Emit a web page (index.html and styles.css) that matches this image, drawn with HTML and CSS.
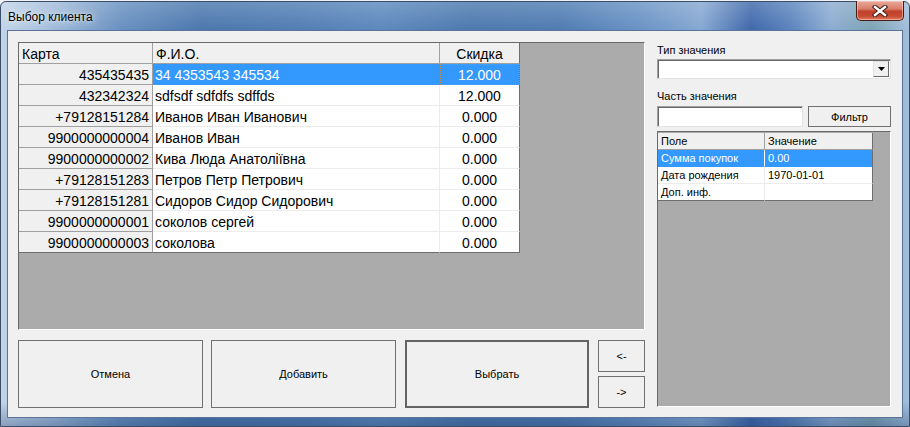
FILE: index.html
```html
<!DOCTYPE html>
<html lang="ru">
<head>
<meta charset="utf-8">
<title>Выбор клиента</title>
<link rel="stylesheet" href="styles.css">
</head>
<body>
<div class="window">
  <div class="titlebar">
    <span class="title">Выбор клиента</span>
    <div class="close">
      <svg width="18" height="12" viewBox="0 0 18 12">
        <path d="M4 2 L14 10 M14 2 L4 10" stroke="#3b1a14" stroke-width="4.4" stroke-linecap="square" fill="none"/>
        <path d="M4 2 L14 10 M14 2 L4 10" stroke="#ffffff" stroke-width="2.4" stroke-linecap="square" fill="none"/>
      </svg>
    </div>
  </div>
  <div class="client">
    <div class="left">
      <div class="panel main-panel">
        <div class="grid">
          <div class="c hdr">Карта</div><div class="c hdr">Ф.И.О.</div><div class="c hdr ctr last">Скидка</div>
          <div class="c fix r">435435435</div><div class="c sel">34 4353543 345534</div><div class="c sel ctr last focus">12.000</div>
          <div class="c fix r">432342324</div><div class="c">sdfsdf sdfdfs sdffds</div><div class="c ctr last">12.000</div>
          <div class="c fix r">+79128151284</div><div class="c">Иванов Иван Иванович</div><div class="c ctr last">0.000</div>
          <div class="c fix r">9900000000004</div><div class="c">Иванов Иван</div><div class="c ctr last">0.000</div>
          <div class="c fix r">9900000000002</div><div class="c">Кива Люда Анатоліївна</div><div class="c ctr last">0.000</div>
          <div class="c fix r">+79128151283</div><div class="c">Петров Петр Петрович</div><div class="c ctr last">0.000</div>
          <div class="c fix r">+79128151281</div><div class="c">Сидоров Сидор Сидорович</div><div class="c ctr last">0.000</div>
          <div class="c fix r">9900000000001</div><div class="c">соколов сергей</div><div class="c ctr last">0.000</div>
          <div class="c fix r bot">9900000000003</div><div class="c bot">соколова</div><div class="c ctr last bot">0.000</div>
        </div>
      </div>
      <div class="buttons">
        <div class="btn big">Отмена</div>
        <div class="btn big">Добавить</div>
        <div class="btn big default">Выбрать</div>
        <div class="arrows">
          <div class="btn small">&lt;-</div>
          <div class="btn small">-&gt;</div>
        </div>
      </div>
    </div>
    <div class="right">
      <div class="label">Тип значения</div>
      <div class="combo">
        <div class="combo-btn">
          <svg width="7" height="4" viewBox="0 0 7 4"><path d="M0 0 H7 L3.5 4 Z" fill="#000"/></svg>
        </div>
      </div>
      <div class="label label2">Часть значения</div>
      <div class="filter-row">
        <div class="input"></div>
        <div class="btn filter">Фильтр</div>
      </div>
      <div class="panel props-panel">
        <div class="props">
          <div class="p hdr">Поле</div><div class="p hdr last">Значение</div>
          <div class="p sel">Сумма покупок</div><div class="p sel last">0.00</div>
          <div class="p">Дата рождения</div><div class="p last">1970-01-01</div>
          <div class="p bot">Доп. инф.</div><div class="p last bot"></div>
        </div>
      </div>
    </div>
  </div>
</div>
</body>
</html>
```
FILE: styles.css
```css
* { box-sizing: border-box; }
body {
  margin: 0;
  background: #eef1f5;
  font-family: "Liberation Sans", Arial, sans-serif;
  overflow: hidden;
}
.window {
  margin-top: 1px;
  width: 910px;
  height: 426px;
  border: 1px solid #3b4d66;
  border-radius: 6px 6px 0 0;
  background:
    linear-gradient(180deg, rgba(255,255,255,0.18) 0, rgba(255,255,255,0) 28px, rgba(0,0,0,0) 400px, rgba(20,50,100,0.35) 426px),
    linear-gradient(90deg, #c2d4e8 0, #a3bddb 50px, #6890c0 120px, #4b77ad 200px, #527eb4 300px, #5d89bd 380px, #4d79ae 470px, #507cb2 560px, #6a93c5 640px, #86a8d2 700px, #4068ab 750px, #5b84bd 790px, #8dacd2 830px, #7ea4b4 870px, #a5c0de 910px);
  display: flex;
  flex-direction: column;
}
.titlebar {
  height: 28px;
  display: flex;
  align-items: flex-start;
  justify-content: space-between;
  position: relative;
}
.title {
  padding: 8px 0 0 7px;
  font-size: 12px;
  color: #000;
  text-shadow: 0 0 8px rgba(255,255,255,0.9), 0 0 3px rgba(255,255,255,0.7);
}
.close {
  margin: -1px 5px 0 0;
  width: 48px;
  height: 20px;
  border: 1px solid #4a1c16;
  border-top: none;
  border-radius: 0 0 5px 5px;
  background: linear-gradient(180deg, #e9a89a 0, #d9806c 40%, #c0412b 55%, #c84a33 80%, #dd7d62 100%);
  box-shadow: inset 0 0 0 1px rgba(255,220,210,0.5);
  display: flex;
  align-items: center;
  justify-content: center;
}
.client {
  margin: 0 6px;
  height: 388px;
  border: 1px solid #5b7399;
  background: #f0f0f0;
  padding: 11px 11px 9px 10px;
  display: flex;
  gap: 12px;
}
.left {
  width: 627px;
  display: flex;
  flex-direction: column;
}
.panel {
  background: #ababab;
  border-top: 1px solid #696969;
  border-left: 1px solid #696969;
  border-right: 1px solid #ffffff;
  border-bottom: 1px solid #ffffff;
}
.main-panel {
  height: 288px;
}
.grid {
  display: grid;
  grid-template-columns: 134px 287px 80px;
  width: 501px;
  font-size: 14px;
  color: #000;
}
.c {
  height: 21px;
  padding: 3px 2px 0 2px;
  line-height: 16px;
  background: #ffffff;
  border-right: 1px solid #ececec;
  border-bottom: 1px solid #ececec;
  white-space: nowrap;
  overflow: hidden;
}
.c.hdr {
  background: #f0f0f0;
  border-right-color: #a0a0a0;
  border-bottom-color: #a0a0a0;
  padding-left: 3px;
}
.c.fix {
  background: #f0f0f0;
  border-right-color: #a0a0a0;
  border-bottom-color: #a0a0a0;
}
.c.r { text-align: right; padding-right: 3px; }
.c.ctr { text-align: center; padding-left: 0; padding-right: 0; }
.c.sel { background: #3399ff; color: #ffffff; border-right-color: #3399ff; border-bottom-color: #3399ff; }
.c.focus { outline: 1px dotted #d9822b; outline-offset: -1px; }
.c.last { border-right-color: #6e6e6e; }
.c.bot { border-bottom-color: #6e6e6e; }
.buttons {
  margin-top: 10px;
  height: 68px;
  display: flex;
}
.btn {
  background: #f0f0f0;
  border: 1px solid #707070;
  font-size: 11px;
  color: #000;
  display: flex;
  align-items: center;
  justify-content: center;
}
.big { width: 185px; height: 68px; margin-right: 8px; }
.big:nth-child(2) { margin-right: 9px; }
.big.default { width: 184px; border: 2px solid #646464; margin-right: 9px; }
.arrows {
  width: 47px;
  display: flex;
  flex-direction: column;
  gap: 4px;
}
.small { height: 32px; }
.right {
  width: 234px;
  display: flex;
  flex-direction: column;
}
.label {
  margin-top: 1px;
  height: 14px;
  line-height: 14px;
  font-size: 11px;
  color: #000;
}
.combo {
  margin-top: 2px;
  height: 20px;
  background: #fff;
  border-top: 1px solid #a0a0a0;
  border-left: 1px solid #a0a0a0;
  border-right: 1px solid #e3e3e3;
  border-bottom: 1px solid #e3e3e3;
  box-shadow: inset 1px 1px 0 #696969;
  display: flex;
  justify-content: flex-end;
  padding: 1px;
}
.combo-btn {
  width: 16px;
  height: 16px;
  background: #f0f0f0;
  border-top: 1px solid #e3e3e3;
  border-left: 1px solid #e3e3e3;
  border-right: 1px solid #696969;
  border-bottom: 1px solid #696969;
  display: flex;
  align-items: center;
  justify-content: center;
}
.label2 { margin-top: 10px; }
.filter-row {
  margin-top: 3px;
  height: 21px;
  display: flex;
  justify-content: space-between;
}
.input {
  width: 146px;
  background: #fff;
  border-top: 1px solid #a0a0a0;
  border-left: 1px solid #a0a0a0;
  border-right: 1px solid #e3e3e3;
  border-bottom: 1px solid #e3e3e3;
  box-shadow: inset 1px 1px 0 #696969;
}
.filter { width: 83px; }
.props-panel {
  margin-top: 4px;
  height: 276px;
  padding-top: 1px;
}
.props {
  display: grid;
  grid-template-columns: 107px 108px;
  width: 215px;
  font-size: 11px;
  color: #000;
}
.p {
  height: 17px;
  line-height: 16px;
  padding-left: 3px;
  background: #fff;
  border-right: 1px solid #ececec;
  border-bottom: 1px solid #ececec;
  white-space: nowrap;
}
.p.hdr { background: #f0f0f0; border-right-color: #a0a0a0; border-bottom-color: #a0a0a0; }
.p.sel { background: #3399ff; color: #fff; border-bottom-color: #3399ff; border-right-color: #ffffff; }
.p.last { border-right-color: #6e6e6e; }
.p.bot { border-bottom-color: #6e6e6e; }
```
